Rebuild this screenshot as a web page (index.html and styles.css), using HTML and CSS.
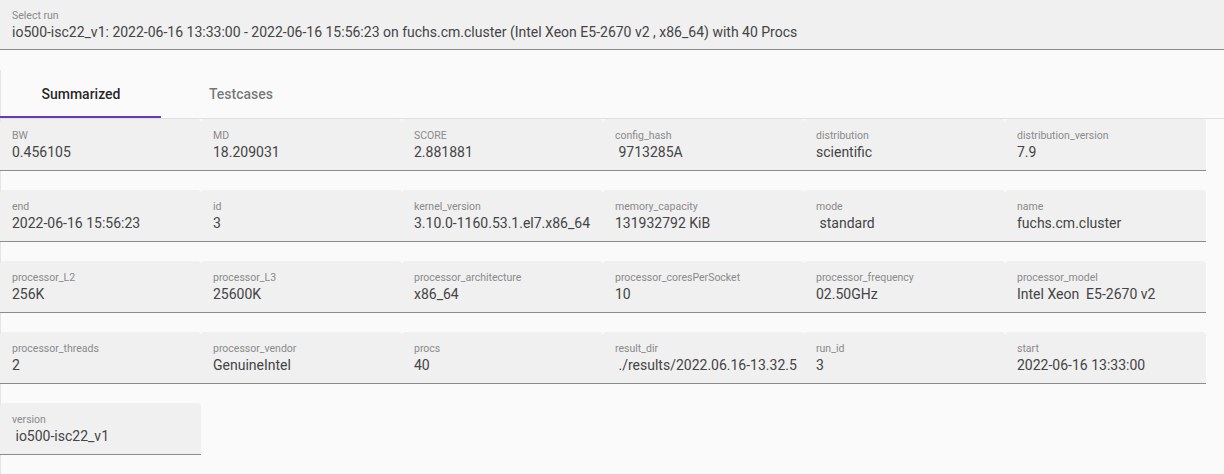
FILE: index.html
```html
<!DOCTYPE html>
<html>
<head>
<meta charset="utf-8">
<link rel="stylesheet" href="styles.css">
</head>
<body>
<div class="select-field">
  <span class="label">Select run</span>
  <span class="value">io500-isc22_v1: 2022-06-16 13:33:00 - 2022-06-16 15:56:23 on fuchs.cm.cluster (Intel Xeon E5-2670 v2 , x86_64) with 40 Procs</span>
</div>
<div class="content">
  <div class="tabs">
    <div class="tab active">Summarized</div>
    <div class="tab">Testcases</div>
  </div>
  <div class="grid">
    <div class="field"><span class="label">BW</span><span class="value">0.456105</span></div>
    <div class="field"><span class="label">MD</span><span class="value">18.209031</span></div>
    <div class="field"><span class="label">SCORE</span><span class="value">2.881881</span></div>
    <div class="field"><span class="label">config_hash</span><span class="value">&nbsp;9713285A</span></div>
    <div class="field"><span class="label">distribution</span><span class="value">scientific</span></div>
    <div class="field"><span class="label">distribution_version</span><span class="value">7.9</span></div>

    <div class="field"><span class="label">end</span><span class="value">2022-06-16 15:56:23</span></div>
    <div class="field"><span class="label">id</span><span class="value">3</span></div>
    <div class="field"><span class="label">kernel_version</span><span class="value">3.10.0-1160.53.1.el7.x86_64</span></div>
    <div class="field"><span class="label">memory_capacity</span><span class="value">131932792 KiB</span></div>
    <div class="field"><span class="label">mode</span><span class="value">&nbsp;standard</span></div>
    <div class="field"><span class="label">name</span><span class="value">fuchs.cm.cluster</span></div>

    <div class="field"><span class="label">processor_L2</span><span class="value">256K</span></div>
    <div class="field"><span class="label">processor_L3</span><span class="value">25600K</span></div>
    <div class="field"><span class="label">processor_architecture</span><span class="value">x86_64</span></div>
    <div class="field"><span class="label">processor_coresPerSocket</span><span class="value">10</span></div>
    <div class="field"><span class="label">processor_frequency</span><span class="value">02.50GHz</span></div>
    <div class="field"><span class="label">processor_model</span><span class="value">Intel Xeon&nbsp; E5-2670 v2</span></div>

    <div class="field"><span class="label">processor_threads</span><span class="value">2</span></div>
    <div class="field"><span class="label">processor_vendor</span><span class="value">GenuineIntel</span></div>
    <div class="field"><span class="label">procs</span><span class="value">40</span></div>
    <div class="field"><span class="label">result_dir</span><span class="value">&nbsp;./results/2022.06.16-13.32.5</span></div>
    <div class="field"><span class="label">run_id</span><span class="value">3</span></div>
    <div class="field"><span class="label">start</span><span class="value">2022-06-16 13:33:00</span></div>

    <div class="field"><span class="label">version</span><span class="value">&nbsp;io500-isc22_v1</span></div>
  </div>
</div>
</body>
</html>
```

FILE: styles.css
```css
html, body {
  margin: 0;
  padding: 0;
  background: #fafafa;
  font-family: Roboto, "Liberation Sans", sans-serif;
  color: rgba(0, 0, 0, 0.87);
}

.label {
  display: block;
  font-size: 10.5px;
  line-height: 12px;
  color: #8a8a8a;
  white-space: nowrap;
}

.value {
  display: block;
  font-size: 14px;
  line-height: 16px;
  color: #444444;
  white-space: pre;
}

.select-field {
  height: 50px;
  box-sizing: border-box;
  background: #f0f0f0;
  border-bottom: 1px solid #8c8c8c;
  padding: 10px 12px 0;
  display: flex;
  flex-direction: column;
}

.select-field .value {
  margin-top: 2px;
}

.content {
  border-left: 1px solid #e4e4e4;
  height: 424px;
}

.tabs {
  margin-top: 20px;
  display: flex;
  height: 49px;
  box-sizing: border-box;
  border-bottom: 1px solid #e0e0e0;
}

.tab {
  position: relative;
  width: 160px;
  display: flex;
  align-items: center;
  justify-content: center;
  font-size: 14px;
  font-weight: 500;
  color: rgba(0, 0, 0, 0.54);
}

.tab.active {
  color: rgba(0, 0, 0, 0.87);
}

.tab.active::after {
  content: "";
  position: absolute;
  left: -1px;
  right: 0;
  bottom: 0;
  height: 2px;
  background: #673ab7;
}

.grid {
  display: grid;
  grid-template-columns: repeat(6, 201px);
  row-gap: 19px;
  margin-left: -1px;
}

.field {
  height: 52px;
  box-sizing: border-box;
  background: #f0f0f0;
  border-radius: 4px 4px 0 0;
  border-bottom: 1px solid #8c8c8c;
  padding: 11px 12px 0;
  display: flex;
  flex-direction: column;
  overflow: hidden;
}

.field .value {
  margin-top: 2px;
}
```
